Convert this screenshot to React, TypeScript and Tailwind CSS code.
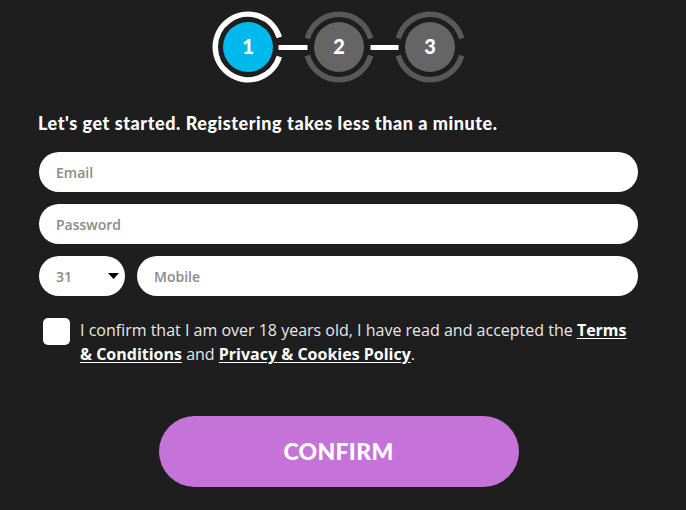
import React from "react";

function Stepper() {
  return (
    <svg width="260" height="94" viewBox="0 0 260 94" className="block">
      <path d="M70.32 37.42 A32.75 32.75 0 1 0 70.32 56.58" fill="none" stroke="#ffffff" strokeWidth="5.5" />
      <circle cx="39" cy="47" r="25" fill="#00b9ec" />
      <line x1="69.5" y1="47.5" x2="98.5" y2="47.5" stroke="#ffffff" strokeWidth="5" />
      <path d="M161.63 38.52 A32.75 32.75 0 0 0 98.37 38.52" fill="none" stroke="#595959" strokeWidth="5.5" />
      <path d="M98.37 55.48 A32.75 32.75 0 0 0 161.63 55.48" fill="none" stroke="#595959" strokeWidth="5.5" />
      <circle cx="130" cy="47" r="25" fill="#656565" />
      <line x1="161.5" y1="47.5" x2="189.5" y2="47.5" stroke="#ffffff" strokeWidth="5" />
      <path d="M252.63 38.52 A32.75 32.75 0 0 0 189.37 38.52" fill="none" stroke="#595959" strokeWidth="5.5" />
      <path d="M189.37 55.48 A32.75 32.75 0 0 0 252.63 55.48" fill="none" stroke="#595959" strokeWidth="5.5" />
      <circle cx="221" cy="47" r="25" fill="#656565" />
      {(
        [
          [39, "1"],
          [130, "2"],
          [221, "3"],
        ] as [number, string][]
      ).map(([x, t]) => (
        <text
          key={t}
          x={x}
          y="54"
          textAnchor="middle"
          fill="#ffffff"
          style={{ fontFamily: "Lato, sans-serif", fontWeight: 900, fontSize: 20 }}
        >
          {t}
        </text>
      ))}
    </svg>
  );
}

export default function App() {
  return (
    <div className="min-h-[510px] w-full bg-[#1e1e1e] font-['Open_Sans',sans-serif]">
      <div className="ml-[39px] flex w-[599px] flex-col">
        <div className="flex justify-center">
          <Stepper />
        </div>
        <h1 className="mt-[19px] -ml-px font-['Lato',sans-serif] text-[18px] font-black leading-[20px] tracking-[0.55px] text-white">
          Let's get started. Registering takes less than a minute.
        </h1>
        <div className="mt-[19px] flex flex-col gap-3">
          <div className="flex h-10 items-center rounded-full bg-white pl-[17px] text-[14px] font-semibold text-[#8a8a8a]">
            Email
          </div>
          <div className="flex h-10 items-center rounded-full bg-white pl-[17px] text-[14px] font-semibold text-[#8a8a8a]">
            Password
          </div>
          <div className="flex gap-3">
            <div className="flex h-10 w-[86px] items-center justify-between rounded-full bg-white pl-[17px] pr-[6px] text-[14px] font-semibold text-[#8a8a8a]">
              <span>31</span>
              <svg width="11" height="6" viewBox="0 0 11 6">
                <path d="M0 0 H11 L5.5 6 Z" fill="#000000" />
              </svg>
            </div>
            <div className="flex h-10 flex-1 items-center rounded-full bg-white pl-[17px] text-[14px] font-semibold text-[#8a8a8a]">
              Mobile
            </div>
          </div>
        </div>
        <div className="mt-[22px] flex items-start gap-[10px] pl-[4px]">
          <div className="h-[27px] w-[27px] shrink-0 rounded-[5px] bg-white" />
          <p className="text-[16px] leading-[24px] text-[#e8e8e8]">
            I confirm that I am over 18 years old, I have read and accepted the{" "}
            <span className="font-bold text-white underline underline-offset-2">Terms &amp; Conditions</span> and{" "}
            <span className="font-bold text-white underline underline-offset-2">Privacy &amp; Cookies Policy</span>.
          </p>
        </div>
        <div className="mt-[50px] flex justify-center">
          <button className="flex h-[71px] w-[360px] items-center justify-center rounded-full bg-[#c673d9] font-['Lato',sans-serif] text-[23px] font-black tracking-[0.3px] text-white">
            CONFIRM
          </button>
        </div>
      </div>
    </div>
  );
}
